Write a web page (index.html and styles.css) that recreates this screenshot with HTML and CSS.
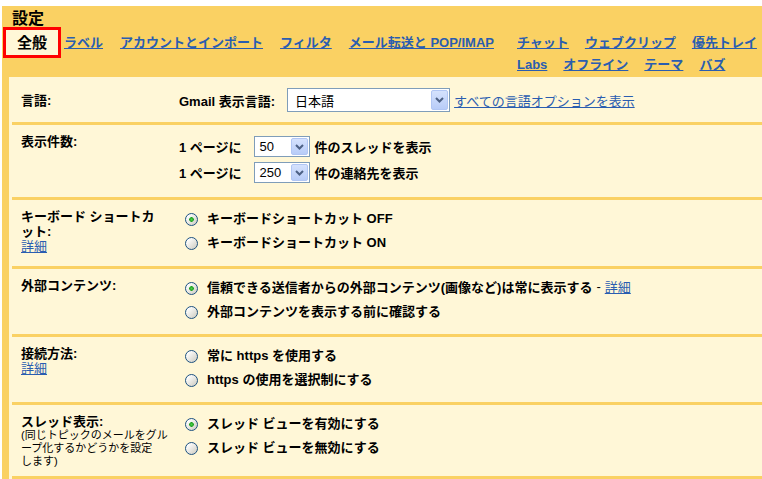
FILE: index.html
```html
<!DOCTYPE html>
<html lang="ja">

<head>
    <meta charset="UTF-8">
    <meta name="viewport" content="width=device-width, initial-scale=1.0">
    <title>設定 - 全般</title>
    <link rel="stylesheet" href="styles.css">
</head>

<body>
    <div class="settings">
        <div class="settings-head">
            <h1 class="settings-title">設定</h1>
            <div class="tabs">
                <span class="tab-current">全般</span>
                <a href="#">ラベル</a>
                <a href="#">アカウントとインポート</a>
                <a href="#">フィルタ</a>
                <a href="#">メール転送と POP/IMAP</a>
                <div class="tabs-more">
                    <a href="#">チャット</a>
                    <a href="#">ウェブクリップ</a>
                    <a href="#">優先トレイ</a>
                    <a href="#">Labs</a>
                    <a href="#">オフライン</a>
                    <a href="#">テーマ</a>
                    <a href="#">バズ</a>
                </div>
            </div>
        </div>

        <div class="panel">
            <!-- 言語 -->
            <div class="row row-lang">
                <div class="label">言語:</div>
                <div class="value">
                    <span class="field-name">Gmail 表示言語:</span>
                    <span class="select select-lang">日本語
                        <span class="select-btn">
                            <svg width="9" height="6" viewBox="0 0 9 6"><path d="M1 1l3.5 3.5L8 1" fill="none" stroke="#4d6185" stroke-width="2"/></svg>
                        </span>
                    </span>
                    <a href="#" class="plain-link">すべての言語オプションを表示</a>
                </div>
            </div>

            <!-- 表示件数 -->
            <div class="row row-count">
                <div class="label">表示件数:</div>
                <div class="value">
                    <div class="count-line">
                        1 ページに
                        <span class="select select-count">50
                            <span class="select-btn">
                                <svg width="9" height="6" viewBox="0 0 9 6"><path d="M1 1l3.5 3.5L8 1" fill="none" stroke="#4d6185" stroke-width="2"/></svg>
                            </span>
                        </span>
                        件のスレッドを表示
                    </div>
                    <div class="count-line">
                        1 ページに
                        <span class="select select-count">250
                            <span class="select-btn">
                                <svg width="9" height="6" viewBox="0 0 9 6"><path d="M1 1l3.5 3.5L8 1" fill="none" stroke="#4d6185" stroke-width="2"/></svg>
                            </span>
                        </span>
                        件の連絡先を表示
                    </div>
                </div>
            </div>

            <!-- キーボード ショートカット -->
            <div class="row">
                <div class="label">
                    キーボード ショートカット:
                    <a href="#" class="more">詳細</a>
                </div>
                <div class="value">
                    <div class="radio-line"><span class="radio checked"></span>キーボードショートカット OFF</div>
                    <div class="radio-line"><span class="radio"></span>キーボードショートカット ON</div>
                </div>
            </div>

            <!-- 外部コンテンツ -->
            <div class="row">
                <div class="label">外部コンテンツ:</div>
                <div class="value">
                    <div class="radio-line"><span class="radio checked"></span>信頼できる送信者からの外部コンテンツ(画像など)は常に表示する<span class="dash">-</span><a href="#" class="plain-link">詳細</a></div>
                    <div class="radio-line"><span class="radio"></span>外部コンテンツを表示する前に確認する</div>
                </div>
            </div>

            <!-- 接続方法 -->
            <div class="row">
                <div class="label">
                    接続方法:
                    <a href="#" class="more">詳細</a>
                </div>
                <div class="value">
                    <div class="radio-line"><span class="radio"></span>常に https を使用する</div>
                    <div class="radio-line"><span class="radio"></span>https の使用を選択制にする</div>
                </div>
            </div>

            <!-- スレッド表示 -->
            <div class="row row-thread">
                <div class="label">
                    スレッド表示:
                    <span class="hint">(同じトピックのメールをグル<br>ープ化するかどうかを設定<br>します)</span>
                </div>
                <div class="value">
                    <div class="radio-line"><span class="radio checked"></span>スレッド ビューを有効にする</div>
                    <div class="radio-line"><span class="radio"></span>スレッド ビューを無効にする</div>
                </div>
            </div>
        </div>
    </div>
</body>

</html>
```

FILE: styles.css
```css
* {
    box-sizing: border-box;
}

body {
    margin: 0;
    background: #fff;
    color: #000;
    font-family: "Liberation Sans", "Noto Sans CJK JP", sans-serif;
    font-size: 13px;
}

a {
    color: #2a5db0;
}

.settings {
    margin: 6px 0 0 2px;
    background: #fad163;
}

/* header: title + tab links */
.settings-title {
    margin: 0;
    padding: 5px 0 0 10px;
    font-size: 16px;
    line-height: 16px;
    font-weight: bold;
}

.tabs {
    display: flex;
    align-items: flex-start;
    padding-left: 1px;
    font-weight: bold;
}

.tabs a {
    margin-left: 17px;
    line-height: 31px;
    white-space: nowrap;
}

.tab-current {
    width: 58px;
    height: 31px;
    border: 3px solid #f00;
    background: #fff7d7;
    text-align: center;
    font-size: 15px;
    line-height: 25px;
}

.tab-current + a {
    margin-left: 3px;
}

.tabs-more {
    flex: none;
    margin-left: auto;
    width: 245px;
    display: flex;
    flex-wrap: wrap;
    column-gap: 16px;
    padding-top: 5px;
}

.tabs-more a {
    margin-left: 0;
    line-height: 22px;
}

/* settings rows */
.panel {
    margin: 1px 0 0 7px;
    padding: 0 0 2px 3px;
    background: #fff7d7;
}

.row {
    display: flex;
    align-items: flex-start;
    padding: 0 0 12px 9px;
    border-bottom: 3px solid #fad163;
}

.label {
    flex: none;
    width: 158px;
    padding: 9px 18px 0 0;
    font-weight: bold;
    line-height: 15px;
}

.label .more {
    display: block;
    font-weight: normal;
}

.hint {
    display: block;
    font-weight: normal;
    font-size: 11px;
    line-height: 13px;
    white-space: nowrap;
}

.value {
    padding-top: 5px;
    font-weight: bold;
}

.radio-line {
    display: flex;
    align-items: center;
    height: 24px;
    white-space: nowrap;
}

.radio {
    flex: none;
    width: 13px;
    height: 13px;
    margin: 4px 9px 0 6px;
    border: 1px solid #1c5180;
    border-radius: 50%;
    background: linear-gradient(135deg, #fff 15%, #d2d0c6 90%);
}

.radio.checked {
    background:
        radial-gradient(circle, #4ccf4c 0, #21a121 2px, transparent 2.6px),
        linear-gradient(135deg, #fff 15%, #d2d0c6 90%);
}

.dash {
    margin: 0 4px;
    font-weight: normal;
}

.plain-link {
    font-weight: normal;
    white-space: nowrap;
}

/* fake select boxes */
.select {
    display: inline-flex;
    align-items: center;
    justify-content: space-between;
    border: 1px solid #7f9db9;
    background: #fff;
    font-weight: normal;
}

.select-btn {
    display: flex;
    align-items: center;
    justify-content: center;
    width: 17px;
    margin: 1px;
    align-self: stretch;
    border: 1px solid #b1c6f4;
    border-radius: 2px;
    background: linear-gradient(#d5e2fd, #b8ccf8);
}

.row-lang {
    align-items: center;
    padding-top: 11px;
    padding-bottom: 10px;
}

.row-lang .label,
.row-lang .value {
    padding-top: 0;
}

.row-lang .value {
    display: flex;
    align-items: center;
}

.field-name {
    margin-right: 12px;
}

.select-lang {
    width: 163px;
    height: 24px;
    padding-left: 7px;
    margin-right: 4px;
}

.row-count {
    padding-bottom: 14px;
}

.row-count .label {
    padding-top: 9px;
}

.row-count .value {
    padding-top: 11px;
}

.count-line {
    display: flex;
    align-items: center;
    height: 21px;
    white-space: nowrap;
}

.count-line + .count-line {
    margin-top: 5px;
}

.select-count {
    width: 56px;
    height: 21px;
    padding-left: 5px;
    margin: 0 5px 0 12px;
}

.row-thread {
    padding-bottom: 8px;
}
```
